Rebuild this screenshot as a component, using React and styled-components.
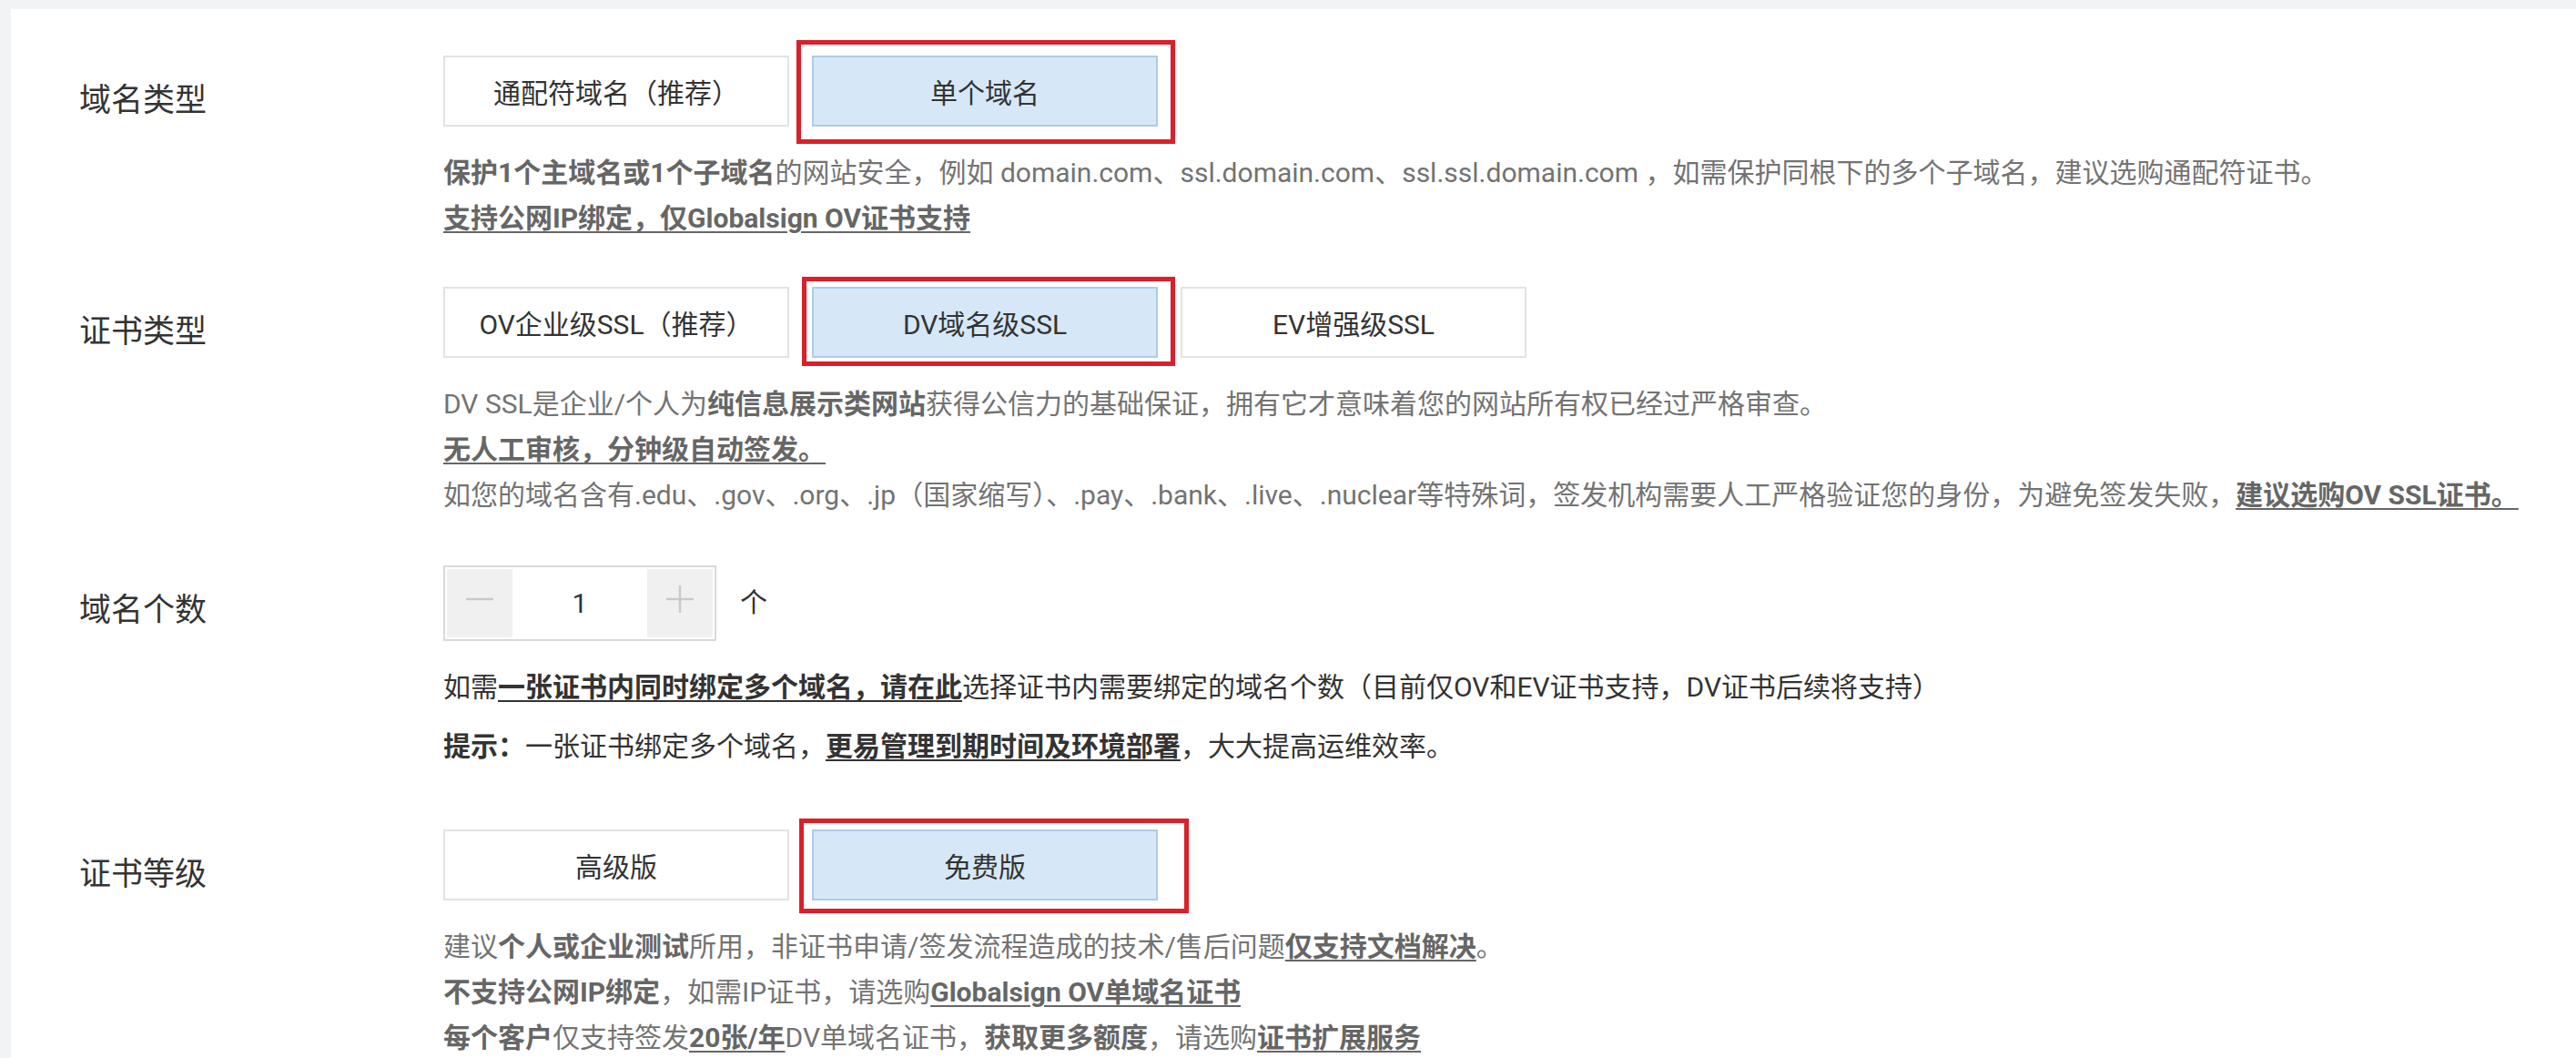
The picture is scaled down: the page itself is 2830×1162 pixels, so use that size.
import React from "react";
import styled, { createGlobalStyle } from "styled-components";

const GlobalStyle = createGlobalStyle`
  html, body {
    margin: 0;
    padding: 0;
    background: #f2f3f5;
  }
  body {
    font-family: Roboto, "Noto Sans CJK SC", sans-serif;
    color: #333;
  }
  * { box-sizing: border-box; }
`;

const Page = styled.div`
  padding: 10px 0 0 12px;
  height: 1162px;
  overflow: hidden;
`;

const Card = styled.div`
  background: #fff;
  height: 100%;
  padding: 51px 0 0 75px;
`;

const Row = styled.section`
  display: flex;
  align-items: flex-start;
  padding-bottom: ${(p) => p.$after || 50}px;
`;

const Label = styled.div`
  flex: none;
  width: 400px;
  height: 78px;
  padding-top: 11px;
  font-size: 35px;
  line-height: 78px;
  color: #333;
`;

const Content = styled.div`
  flex: 1;
  min-width: 0;
  display: flex;
  flex-direction: column;
`;

const Options = styled.div`
  display: flex;
  gap: 25px;
`;

const OptionWrap = styled.div`
  position: relative;
`;

const Option = styled.div`
  width: 380px;
  height: 78px;
  display: flex;
  align-items: center;
  justify-content: center;
  font-size: 30px;
  color: #333;
  background: ${(p) => (p.$active ? "#d6e8f7" : "#fff")};
  border: 2px solid ${(p) => (p.$active ? "#accce6" : "#e3e3e3")};
  white-space: nowrap;
`;

const Highlight = styled.div`
  position: absolute;
  top: ${(p) => p.$t}px;
  right: ${(p) => p.$r}px;
  bottom: ${(p) => p.$b}px;
  left: ${(p) => p.$l}px;
  border: 5px solid #d9202b;
  pointer-events: none;
`;

const Desc = styled.div`
  margin-top: 26px;
  display: flex;
  flex-direction: column;
  gap: ${(p) => p.$space || 0}px;
  font-size: 30px;
  color: ${(p) => (p.$dark ? "#333" : "#737373")};
  white-space: nowrap;
`;

const Para = styled.p`
  margin: 0;
  height: 50px;
  line-height: 50px;
  overflow: visible;
`;

const Strong = styled.b`
  font-weight: 700;
  color: ${(p) => (p.$dark ? "#333" : "#666")};
`;

const Link = styled.a`
  font-weight: 700;
  color: ${(p) => (p.$dark ? "#333" : "#666")};
  text-decoration: underline;
  text-decoration-thickness: 2px;
  text-underline-offset: 4px;
  cursor: pointer;
`;

const StepperRow = styled.div`
  display: flex;
  align-items: center;
`;

const Stepper = styled.div`
  width: 300px;
  height: 83px;
  display: flex;
  border: 2px solid #d9d9d9;
  padding: 2px;
`;

const StepButton = styled.button`
  width: 72px;
  border: none;
  background: #f0f0f0;
  display: flex;
  align-items: center;
  justify-content: center;
  padding: 0 0 10px;
  cursor: pointer;
`;

const StepValue = styled.div`
  flex: 1;
  display: flex;
  align-items: center;
  justify-content: center;
  font-size: 30px;
  color: #333;
  background: #fff;
`;

const Unit = styled.span`
  margin-left: 26px;
  font-size: 30px;
  color: #333;
  padding-bottom: 8px;
`;

const MinusIcon = () => (
  <svg width="30" height="30" viewBox="0 0 30 30">
    <path d="M0 15H30" stroke="#c9c9c9" strokeWidth="2.5" />
  </svg>
);

const PlusIcon = () => (
  <svg width="30" height="30" viewBox="0 0 30 30">
    <path d="M0 15H30M15 0V30" stroke="#c9c9c9" strokeWidth="2.5" />
  </svg>
);

const OptionGroup = ({ items, active, box }) => (
  <Options>
    {items.map((it) => (
      <OptionWrap key={it}>
        <Option $active={it === active}>{it}</Option>
        {it === active && box && (
          <Highlight $t={box[0]} $r={box[1]} $b={box[2]} $l={box[3]} />
        )}
      </OptionWrap>
    ))}
  </Options>
);

export default function App() {
  return (
    <>
      <GlobalStyle />
      <Page>
        <Card>
          <Row>
            <Label>域名类型</Label>
            <Content>
              <OptionGroup
                items={["通配符域名（推荐）", "单个域名"]}
                active="单个域名"
                box={[-17, -19, -19, -17]}
              />
              <Desc>
                <Para>
                  <Strong>保护1个主域名或1个子域名</Strong>的网站安全，例如 domain.com、ssl.domain.com、ssl.ssl.domain.com ，如需保护同根下的多个子域名，建议选购通配符证书。
                </Para>
                <Para>
                  <Link>支持公网IP绑定，仅Globalsign OV证书支持</Link>
                </Para>
              </Desc>
            </Content>
          </Row>

          <Row $after={52}>
            <Label>证书类型</Label>
            <Content>
              <OptionGroup
                items={["OV企业级SSL（推荐）", "DV域名级SSL", "EV增强级SSL"]}
                active="DV域名级SSL"
                box={[-11, -19, -9, -11]}
              />
              <Desc>
                <Para>
                  DV SSL是企业/个人为<Strong>纯信息展示类网站</Strong>获得公信力的基础保证，拥有它才意味着您的网站所有权已经过严格审查。
                </Para>
                <Para>
                  <Link>无人工审核，分钟级自动签发。</Link>
                </Para>
                <Para>
                  如您的域名含有.edu、.gov、.org、.jp（国家缩写）、.pay、.bank、.live、.nuclear等特殊词，签发机构需要人工严格验证您的身份，为避免签发失败，<Link>建议选购OV SSL证书。</Link>
                </Para>
              </Desc>
            </Content>
          </Row>

          <Row $after={66}>
            <Label>域名个数</Label>
            <Content>
              <StepperRow>
                <Stepper>
                  <StepButton aria-label="减少">
                    <MinusIcon />
                  </StepButton>
                  <StepValue>1</StepValue>
                  <StepButton aria-label="增加">
                    <PlusIcon />
                  </StepButton>
                </Stepper>
                <Unit>个</Unit>
              </StepperRow>
              <Desc $dark $space={15}>
                <Para>
                  如需<Link $dark>一张证书内同时绑定多个域名，请在此</Link>选择证书内需要绑定的域名个数（目前仅OV和EV证书支持，DV证书后续将支持）
                </Para>
                <Para>
                  <Strong $dark>提示：</Strong>一张证书绑定多个域名，<Link $dark>更易管理到期时间及环境部署</Link>，大大提高运维效率。
                </Para>
              </Desc>
            </Content>
          </Row>

          <Row>
            <Label>证书等级</Label>
            <Content>
              <OptionGroup
                items={["高级版", "免费版"]}
                active="免费版"
                box={[-12, -34, -14, -14]}
              />
              <Desc>
                <Para>
                  建议<Strong>个人或企业测试</Strong>所用，非证书申请/签发流程造成的技术/售后问题<Link>仅支持文档解决</Link>。
                </Para>
                <Para>
                  <Strong>不支持公网IP绑定</Strong>，如需IP证书，请选购<Link>Globalsign OV单域名证书</Link>
                </Para>
                <Para>
                  <Strong>每个客户</Strong>仅支持签发<Link>20张/年</Link>DV单域名证书，<Strong>获取更多额度</Strong>，请选购<Link>证书扩展服务</Link>
                </Para>
              </Desc>
            </Content>
          </Row>
        </Card>
      </Page>
    </>
  );
}
